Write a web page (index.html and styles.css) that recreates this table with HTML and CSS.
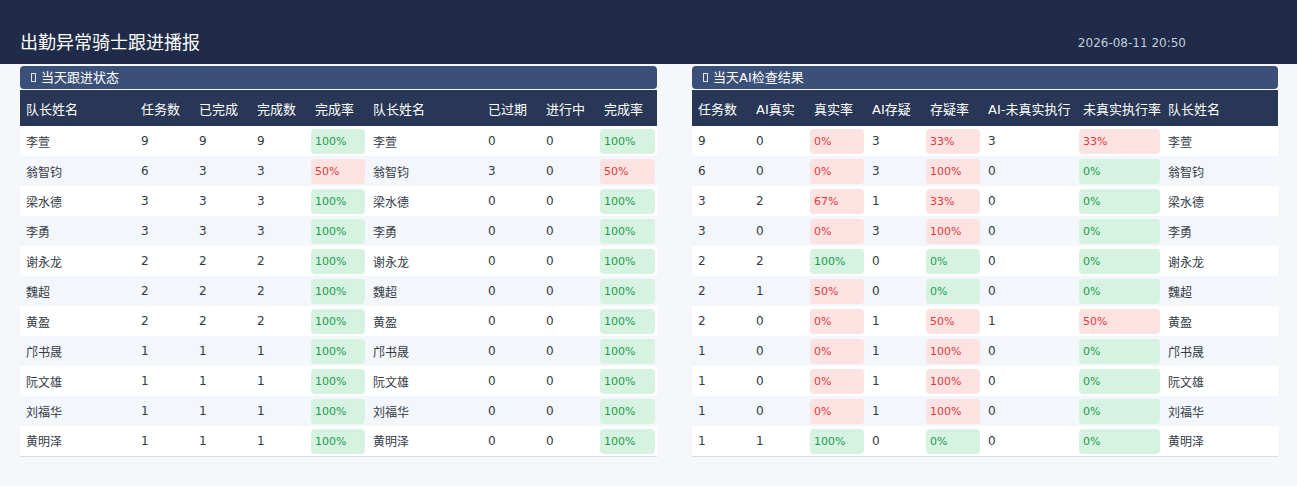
FILE: index.html
```html
<!DOCTYPE html>
<html lang="zh-CN">
<head>
<meta charset="utf-8">
<title>出勤异常骑士跟进播报</title>
<link rel="stylesheet" href="styles.css">
</head>
<body>
<header class="top">
  <h1 class="title">出勤异常骑士跟进播报</h1>
  <div class="date">2026-08-11 20:50</div>
</header>
<main class="panels">
  <section class="panel panel-left">
    <div class="panel-title"><span class="tofu"></span>当天跟进状态</div>
    <table class="grid">
      <colgroup>
        <col class="w115"><col class="w58"><col class="w58"><col class="w58"><col class="w58"><col class="w115"><col class="w58"><col class="w58"><col class="w59">
      </colgroup>
      <thead>
        <tr><th>队长姓名</th><th>任务数</th><th>已完成</th><th>完成数</th><th>完成率</th><th>队长姓名</th><th>已过期</th><th>进行中</th><th>完成率</th></tr>
      </thead>
      <tbody>
        <tr><td>李萱</td><td>9</td><td>9</td><td>9</td><td class="bc"><span class="badge ok">100%</span></td><td>李萱</td><td>0</td><td>0</td><td class="bc"><span class="badge ok">100%</span></td></tr>
        <tr><td>翁智钧</td><td>6</td><td>3</td><td>3</td><td class="bc"><span class="badge bad">50%</span></td><td>翁智钧</td><td>3</td><td>0</td><td class="bc"><span class="badge bad">50%</span></td></tr>
        <tr><td>梁水德</td><td>3</td><td>3</td><td>3</td><td class="bc"><span class="badge ok">100%</span></td><td>梁水德</td><td>0</td><td>0</td><td class="bc"><span class="badge ok">100%</span></td></tr>
        <tr><td>李勇</td><td>3</td><td>3</td><td>3</td><td class="bc"><span class="badge ok">100%</span></td><td>李勇</td><td>0</td><td>0</td><td class="bc"><span class="badge ok">100%</span></td></tr>
        <tr><td>谢永龙</td><td>2</td><td>2</td><td>2</td><td class="bc"><span class="badge ok">100%</span></td><td>谢永龙</td><td>0</td><td>0</td><td class="bc"><span class="badge ok">100%</span></td></tr>
        <tr><td>魏超</td><td>2</td><td>2</td><td>2</td><td class="bc"><span class="badge ok">100%</span></td><td>魏超</td><td>0</td><td>0</td><td class="bc"><span class="badge ok">100%</span></td></tr>
        <tr><td>黄盈</td><td>2</td><td>2</td><td>2</td><td class="bc"><span class="badge ok">100%</span></td><td>黄盈</td><td>0</td><td>0</td><td class="bc"><span class="badge ok">100%</span></td></tr>
        <tr><td>邝书晟</td><td>1</td><td>1</td><td>1</td><td class="bc"><span class="badge ok">100%</span></td><td>邝书晟</td><td>0</td><td>0</td><td class="bc"><span class="badge ok">100%</span></td></tr>
        <tr><td>阮文雄</td><td>1</td><td>1</td><td>1</td><td class="bc"><span class="badge ok">100%</span></td><td>阮文雄</td><td>0</td><td>0</td><td class="bc"><span class="badge ok">100%</span></td></tr>
        <tr><td>刘福华</td><td>1</td><td>1</td><td>1</td><td class="bc"><span class="badge ok">100%</span></td><td>刘福华</td><td>0</td><td>0</td><td class="bc"><span class="badge ok">100%</span></td></tr>
        <tr><td>黄明泽</td><td>1</td><td>1</td><td>1</td><td class="bc"><span class="badge ok">100%</span></td><td>黄明泽</td><td>0</td><td>0</td><td class="bc"><span class="badge ok">100%</span></td></tr>
      </tbody>
    </table>
  </section>
  <section class="panel panel-right">
    <div class="panel-title"><span class="tofu"></span>当天AI检查结果</div>
    <table class="grid">
      <colgroup>
        <col class="w58"><col class="w58"><col class="w58"><col class="w58"><col class="w58"><col class="w95"><col class="w85"><col class="w116">
      </colgroup>
      <thead>
        <tr><th>任务数</th><th>AI真实</th><th>真实率</th><th>AI存疑</th><th>存疑率</th><th>AI-未真实执行</th><th>未真实执行率</th><th>队长姓名</th></tr>
      </thead>
      <tbody>
        <tr><td>9</td><td>0</td><td class="bc"><span class="badge bad">0%</span></td><td>3</td><td class="bc"><span class="badge bad">33%</span></td><td>3</td><td class="bc"><span class="badge bad">33%</span></td><td>李萱</td></tr>
        <tr><td>6</td><td>0</td><td class="bc"><span class="badge bad">0%</span></td><td>3</td><td class="bc"><span class="badge bad">100%</span></td><td>0</td><td class="bc"><span class="badge ok">0%</span></td><td>翁智钧</td></tr>
        <tr><td>3</td><td>2</td><td class="bc"><span class="badge bad">67%</span></td><td>1</td><td class="bc"><span class="badge bad">33%</span></td><td>0</td><td class="bc"><span class="badge ok">0%</span></td><td>梁水德</td></tr>
        <tr><td>3</td><td>0</td><td class="bc"><span class="badge bad">0%</span></td><td>3</td><td class="bc"><span class="badge bad">100%</span></td><td>0</td><td class="bc"><span class="badge ok">0%</span></td><td>李勇</td></tr>
        <tr><td>2</td><td>2</td><td class="bc"><span class="badge ok">100%</span></td><td>0</td><td class="bc"><span class="badge ok">0%</span></td><td>0</td><td class="bc"><span class="badge ok">0%</span></td><td>谢永龙</td></tr>
        <tr><td>2</td><td>1</td><td class="bc"><span class="badge bad">50%</span></td><td>0</td><td class="bc"><span class="badge ok">0%</span></td><td>0</td><td class="bc"><span class="badge ok">0%</span></td><td>魏超</td></tr>
        <tr><td>2</td><td>0</td><td class="bc"><span class="badge bad">0%</span></td><td>1</td><td class="bc"><span class="badge bad">50%</span></td><td>1</td><td class="bc"><span class="badge bad">50%</span></td><td>黄盈</td></tr>
        <tr><td>1</td><td>0</td><td class="bc"><span class="badge bad">0%</span></td><td>1</td><td class="bc"><span class="badge bad">100%</span></td><td>0</td><td class="bc"><span class="badge ok">0%</span></td><td>邝书晟</td></tr>
        <tr><td>1</td><td>0</td><td class="bc"><span class="badge bad">0%</span></td><td>1</td><td class="bc"><span class="badge bad">100%</span></td><td>0</td><td class="bc"><span class="badge ok">0%</span></td><td>阮文雄</td></tr>
        <tr><td>1</td><td>0</td><td class="bc"><span class="badge bad">0%</span></td><td>1</td><td class="bc"><span class="badge bad">100%</span></td><td>0</td><td class="bc"><span class="badge ok">0%</span></td><td>刘福华</td></tr>
        <tr><td>1</td><td>1</td><td class="bc"><span class="badge ok">100%</span></td><td>0</td><td class="bc"><span class="badge ok">0%</span></td><td>0</td><td class="bc"><span class="badge ok">0%</span></td><td>黄明泽</td></tr>
      </tbody>
    </table>
  </section>
</main>
</body>
</html>
```

FILE: styles.css
```css
* { box-sizing: border-box; }

html, body {
  margin: 0;
  padding: 0;
}

body {
  background: #f5f7fb;
  font-family: "DejaVu Sans", "Noto Sans CJK SC", sans-serif;
  color: #333a45;
}

.top {
  height: 64px;
  background: #1f2b48;
  display: flex;
  align-items: flex-end;
  justify-content: space-between;
  padding: 0 111px 8px 20px;
}

.title {
  margin: 0;
  font-size: 18px;
  font-weight: 400;
  line-height: 26px;
  color: #ffffff;
}

.date {
  font-size: 12px;
  line-height: 22px;
  margin-bottom: 2px;
  color: #c3cbdb;
}

.panels {
  display: flex;
  gap: 35px;
  padding: 2px 20px 0 20px;
}

.panel-left { width: 637px; }
.panel-right { width: 586px; }

.panel-title {
  height: 23px;
  background: #3b5078;
  border-radius: 4px;
  color: #ffffff;
  font-size: 13px;
  line-height: 23px;
  display: flex;
  align-items: center;
  margin-bottom: 1px;
}

.tofu {
  display: inline-block;
  width: 5px;
  height: 9px;
  border: 1px solid rgba(255, 255, 255, 0.85);
  margin: 0 5px 0 11px;
}

.grid {
  width: 100%;
  border-collapse: collapse;
  table-layout: fixed;
  border-bottom: 1px solid #d6dce8;
}

.w58 { width: 58px; }
.w59 { width: 59px; }
.w85 { width: 85px; }
.w95 { width: 95px; }
.w115 { width: 115px; }
.w116 { width: 116px; }

.grid th {
  height: 36px;
  background: #283756;
  color: #ffffff;
  font-size: 13px;
  font-weight: 400;
  text-align: left;
  padding: 0 6px;
  white-space: nowrap;
}

.grid td {
  height: 30px;
  padding: 0 6px;
  font-size: 12px;
  color: #333a45;
  white-space: nowrap;
  vertical-align: middle;
}

.grid tbody tr:nth-child(odd) { background: #ffffff; }
.grid tbody tr:nth-child(even) { background: #f3f6fa; }

.grid td.bc {
  padding: 0 2px;
}

.badge {
  display: block;
  height: 25px;
  line-height: 25px;
  padding: 0 4px;
  border-radius: 4px;
  margin-top: 1px;
  font-size: 11px;
}

.badge.ok {
  background: #d5f3e0;
  color: #1f9a4c;
}

.badge.bad {
  background: #fde2e2;
  color: #e03b3b;
}
```
